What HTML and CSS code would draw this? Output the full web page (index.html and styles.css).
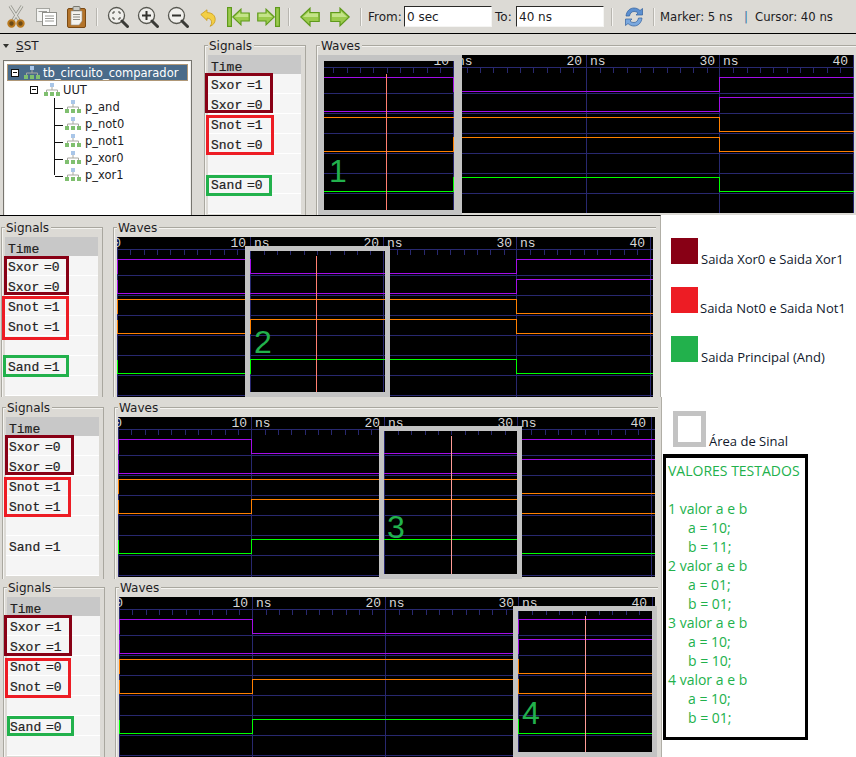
FILE: index.html
```
<!DOCTYPE html>
<html lang="pt">
<head>
<meta charset="utf-8">
<title>GTKWave</title>
<link rel="stylesheet" href="styles.css">
</head>
<body>
<svg class="defs" width="0" height="0" aria-hidden="true">
  <defs>
    <symbol id="wave" viewBox="0 0 537 160" overflow="visible">
      <g class="grid">
        <path d="M0 12.5H537M0 38.5H537M0 58.5H537M0 78.5H537M0 98.5H537M0 118.5H537M0 138.5H537M0 158.5H537"/>
        <path d="M.5 0V160M133.5 0V160M266.5 0V160M399.5 0V160M533.5 0V160"/>
        <path d="M13.5 12V18M27.5 12V18M40.5 12V18M53.5 12V18M67.5 12V18M80.5 12V18M93.5 12V18M107.5 12V18M120.5 12V18M147.5 12V18M160.5 12V18M173.5 12V18M187.5 12V18M200.5 12V18M213.5 12V18M227.5 12V18M240.5 12V18M253.5 12V18M280.5 12V18M293.5 12V18M307.5 12V18M320.5 12V18M333.5 12V18M347.5 12V18M360.5 12V18M373.5 12V18M387.5 12V18M413.5 12V18M427.5 12V18M440.5 12V18M453.5 12V18M467.5 12V18M480.5 12V18M493.5 12V18M507.5 12V18M520.5 12V18"/>
      </g>
      <path class="sig purple" d="M.5 36.5V22.5H133.5V36.5H399.5V22.5H537"/>
      <path class="sig purple" d="M.5 42.5V56.5H399.5V42.5H537"/>
      <path class="sig orange" d="M.5 76.5V62.5H399.5V76.5H537"/>
      <path class="sig orange" d="M.5 82.5V96.5H133.5V82.5H399.5V96.5H537"/>
      <path class="sig green" d="M.5 122.5V136.5H133.5V122.5H399.5V136.5H537"/>
    </symbol>
    <symbol id="hier" viewBox="0 0 16 14">
      <rect x="6" y="0" width="4" height="4" fill="#a9c6e8"/>
      <path d="M8 4V7M2.5 9V7H13.5V9" fill="none" stroke="#a8a8a0"/>
      <rect x="0" y="9" width="4" height="4" fill="#7fbf6f"/>
      <rect x="6" y="9" width="4" height="4" fill="#7fbf6f"/>
      <rect x="12" y="9" width="4" height="4" fill="#7fbf6f"/>
    </symbol>
    <symbol id="go-left" viewBox="0 0 20 20">
      <path d="M.8 10 10 1.2V5.500H19.200V14.500H10V18.800Z" fill="#9ccb4e" stroke="#5f9a1c" stroke-width="1.200"/>
      <path d="M3 10 9 4.500V6.500H18V10Z" fill="#c4e389"/>
    </symbol>
    <symbol id="go-right" viewBox="0 0 20 20">
      <path d="M19.200 10 10 1.200V5.500H.8V14.500H10V18.800Z" fill="#9ccb4e" stroke="#5f9a1c" stroke-width="1.200"/>
      <path d="M17 10 11 4.500V6.500H2V10Z" fill="#c4e389"/>
    </symbol>
    <symbol id="lens" viewBox="0 0 22 22">
      <circle cx="9.500" cy="9.500" r="8" fill="#f0efec" stroke="#56564f" stroke-width="1.300"/>
      <path d="M15 15 20.500 20.500" stroke="#3a3a36" stroke-width="3" stroke-linecap="round"/>
    </symbol>
  </defs>
</svg>

<section class="shot shot-main">
  <header class="toolbar">
    <span class="slot">
      <svg class="ico-cut" viewBox="0 0 18 23">
        <path d="M3 1 12 15M15 1 6 15" stroke="#8f8f88" stroke-width="3.200" fill="none"/>
        <path d="M3 1 12 15M15 1 6 15" stroke="#dcdcd6" stroke-width="1.600" fill="none"/>
        <circle cx="4.500" cy="18.500" r="3.200" fill="#6b4a17" stroke="#b9791f" stroke-width="2"/>
        <circle cx="13.500" cy="18.500" r="3.200" fill="#6b4a17" stroke="#b9791f" stroke-width="2"/>
      </svg>
    </span>
    <span class="slot">
      <svg class="ico-copy" viewBox="0 0 21 18">
        <rect x=".5" y=".5" width="13" height="13" fill="#f4f4f2" stroke="#a5a5a0"/>
        <rect x="6.500" y="4.500" width="14" height="13" fill="#fff" stroke="#8f8f8a"/>
        <path d="M9 8H18M9 10.500H18M9 13H18M2.500 3.500H11" stroke="#9a9a96"/>
      </svg>
    </span>
    <span class="slot">
      <svg class="ico-paste" viewBox="0 0 19 22">
        <rect x=".5" y="2.500" width="18" height="19" rx="1.500" fill="#b4742a" stroke="#7a4a14"/>
        <path d="M4 5H15V15L12 19H4Z" fill="#f4f3ee" stroke="#9c9c94" stroke-width=".6"/>
        <rect x="6" y=".5" width="7" height="4" rx="1" fill="#c9c9c3" stroke="#77776f"/>
        <path d="M6 8.500H13M6 11H13M6 13.500H13" stroke="#8a8a84"/>
      </svg>
    </span>
    <span class="sep"></span>
    <span class="slot">
      <svg class="ico-zoom" viewBox="0 0 22 22"><use href="#lens"/><path d="M6 8V6H8M11 6H13V8M13 11V13H11M8 13H6V11" fill="none" stroke="#44443f"/></svg>
    </span>
    <span class="slot">
      <svg class="ico-zoom" viewBox="0 0 22 22"><use href="#lens"/><path d="M5 9.500H14M9.500 5V14" stroke="#33332f" stroke-width="2"/></svg>
    </span>
    <span class="slot">
      <svg class="ico-zoom" viewBox="0 0 22 22"><use href="#lens"/><path d="M5 9.500H14" stroke="#33332f" stroke-width="2"/></svg>
    </span>
    <span class="slot">
      <svg class="ico-undo" viewBox="0 0 16 18">
        <path d="M.8 5.500 7 .8V3.600C12.500 3.600 15.200 6.800 15.200 10.500 15.200 13.800 13 16.300 10 17.300 11.800 15.300 12 13 11 11.200 10.200 9.800 8.800 9.200 7 9.200V11.500Z" fill="#f3cf45" stroke="#c99a1a" stroke-width=".8"/>
      </svg>
    </span>
    <span class="slot">
      <svg class="ico-jump" viewBox="0 0 23 20">
        <rect x=".6" y=".6" width="3.800" height="18.800" fill="#9ccb4e" stroke="#5f9a1c" stroke-width="1.200"/>
        <svg x="5" y="1" width="18" height="18" viewBox="0 0 20 20"><use href="#go-left"/></svg>
      </svg>
    </span>
    <span class="slot">
      <svg class="ico-jump" viewBox="0 0 23 20">
        <rect x="18.600" y=".6" width="3.800" height="18.800" fill="#9ccb4e" stroke="#5f9a1c" stroke-width="1.200"/>
        <svg x="0" y="1" width="18" height="18" viewBox="0 0 20 20"><use href="#go-right"/></svg>
      </svg>
    </span>
    <span class="sep"></span>
    <span class="slot"><svg class="ico-go" viewBox="0 0 20 20"><use href="#go-left"/></svg></span>
    <span class="slot"><svg class="ico-go" viewBox="0 0 20 20"><use href="#go-right"/></svg></span>
    <span class="sep"></span>
    <label class="tb-label tb-from">From:</label>
    <input class="tb-input" value="0 sec">
    <label class="tb-label tb-to">To:</label>
    <input class="tb-input" value="40 ns">
    <span class="sep"></span>
    <span class="slot">
      <svg class="ico-reload" viewBox="0 0 20 20">
        <path d="M2 9C2.500 4 6 1 10 1 12.500 1 14.500 2 16 3.500L18.500 1.500V8H12L14 6C13 5 11.500 4.500 10 4.500 8 4.500 6 6 5.500 9Z" fill="#5b8fd0" stroke="#2f5f9e" stroke-width=".7"/>
        <path d="M18 11C17.500 16 14 19 10 19 7.500 19 5.500 18 4 16.500L1.500 18.500V12H8L6 14C7 15 8.500 15.500 10 15.500 12 15.500 14 14 14.500 11Z" fill="#7aa8de" stroke="#2f5f9e" stroke-width=".7"/>
      </svg>
    </span>
    <span class="sep"></span>
    <p class="status"><span class="status-marker">Marker: 5 ns</span><span class="status-bar">|</span><span>Cursor: 40 ns</span></p>
  </header>

  <div class="main-body">
    <aside class="sst">
      <h2 class="sst-title"><span class="tri"></span><span><u>S</u>ST</span></h2>
      <div class="tree">
        <div class="tree-row tree-root"><span class="exp"></span><svg class="hier"><use href="#hier"/></svg><span>tb_circuito_comparador</span></div>
        <div class="tree-row tree-uut"><span class="exp"></span><svg class="hier"><use href="#hier"/></svg><span>UUT</span></div>
        <div class="tree-kids">
          <div class="tree-row tree-leaf"><svg class="hier"><use href="#hier"/></svg><span>p_and</span></div>
          <div class="tree-row tree-leaf"><svg class="hier"><use href="#hier"/></svg><span>p_not0</span></div>
          <div class="tree-row tree-leaf"><svg class="hier"><use href="#hier"/></svg><span>p_not1</span></div>
          <div class="tree-row tree-leaf"><svg class="hier"><use href="#hier"/></svg><span>p_xor0</span></div>
          <div class="tree-row tree-leaf"><svg class="hier"><use href="#hier"/></svg><span>p_xor1</span></div>
        </div>
      </div>
    </aside>
    <div class="duo">
      <div class="pane pane-signals">
        <span class="pane-title">Signals</span>
        <ul class="siglist">
          <li class="sighead">Time</li>
          <li>Sxor =1</li><li>Sxor =0</li><li>Snot =1</li><li>Snot =0</li><li></li><li>Sand =0</li><li></li>
        </ul>
        <i class="mark maroon m1a"></i><i class="mark red m1b"></i><i class="mark grn m1c"></i>
      </div>
      <div class="pane pane-waves">
        <span class="pane-title">Waves</span>
        <div class="view view-1">
          <svg class="trace" viewBox="0 0 534 158">
            <use href="#wave" width="537" height="160"/>
            <line class="cursor" x1="66.500" x2="66.500" y1="19" y2="158"/>
            <g class="axis"><text x="129" y="10" text-anchor="end">10</text><text x="137" y="10">ns</text><text x="262" y="10" text-anchor="end">20</text><text x="270" y="10">ns</text><text x="395" y="10" text-anchor="end">30</text><text x="403" y="10">ns</text><text x="528" y="10" text-anchor="end">40</text></g>
          </svg>
          <div class="area area-1"><b class="num num-1">1</b></div>
        </div>
      </div>
    </div>
  </div>
</section>

<section class="shot shot-2">
  <div class="duo">
    <div class="pane pane-signals">
      <span class="pane-title">Signals</span>
      <ul class="siglist">
        <li class="sighead">Time</li>
        <li>Sxor =0</li><li>Sxor =0</li><li>Snot =1</li><li>Snot =1</li><li></li><li>Sand =1</li><li></li>
      </ul>
      <i class="mark maroon m2a"></i><i class="mark red m2b"></i><i class="mark grn m2c"></i>
    </div>
    <div class="pane pane-waves">
      <span class="pane-title">Waves</span>
      <div class="view">
        <svg class="trace" viewBox="0 0 536 160">
          <use href="#wave" width="537" height="160"/>
          <line class="cursor" x1="199.500" x2="199.500" y1="19" y2="160"/>
          <g class="axis"><text x="4" y="10" text-anchor="end">0</text><text x="129" y="10" text-anchor="end">10</text><text x="137" y="10">ns</text><text x="262" y="10" text-anchor="end">20</text><text x="270" y="10">ns</text><text x="395" y="10" text-anchor="end">30</text><text x="403" y="10">ns</text><text x="528" y="10" text-anchor="end">40</text></g>
        </svg>
        <div class="area area-2"><b class="num num-2">2</b></div>
      </div>
    </div>
  </div>
</section>

<section class="shot shot-3">
  <div class="duo">
    <div class="pane pane-signals">
      <span class="pane-title">Signals</span>
      <ul class="siglist">
        <li class="sighead">Time</li>
        <li>Sxor =0</li><li>Sxor =0</li><li>Snot =1</li><li>Snot =1</li><li></li><li>Sand =1</li><li></li>
      </ul>
      <i class="mark maroon m3a"></i><i class="mark red m3b"></i>
    </div>
    <div class="pane pane-waves">
      <span class="pane-title">Waves</span>
      <div class="view view-3">
        <svg class="trace" viewBox="0 0 537 160">
          <use href="#wave" width="537" height="160"/>
          <line class="cursor cursor-rose" x1="333.500" x2="333.500" y1="19" y2="160"/>
          <g class="axis"><text x="4" y="10" text-anchor="end">0</text><text x="129" y="10" text-anchor="end">10</text><text x="137" y="10">ns</text><text x="262" y="10" text-anchor="end">20</text><text x="270" y="10">ns</text><text x="395" y="10" text-anchor="end">30</text><text x="403" y="10">ns</text><text x="528" y="10" text-anchor="end">40</text></g>
        </svg>
        <div class="area area-3"><b class="num num-3">3</b></div>
      </div>
    </div>
  </div>
</section>

<section class="shot shot-4">
  <div class="duo">
    <div class="pane pane-signals">
      <span class="pane-title">Signals</span>
      <ul class="siglist">
        <li class="sighead">Time</li>
        <li>Sxor =1</li><li>Sxor =1</li><li>Snot =0</li><li>Snot =0</li><li></li><li>Sand =0</li><li></li>
      </ul>
      <i class="mark maroon m4a"></i><i class="mark red m4b"></i><i class="mark grn m4c"></i>
    </div>
    <div class="pane pane-waves">
      <span class="pane-title">Waves</span>
      <div class="view">
        <svg class="trace" viewBox="0 0 536 160">
          <use href="#wave" width="537" height="160"/>
          <line class="cursor cursor-rose" x1="466.500" x2="466.500" y1="19" y2="160"/>
          <g class="axis"><text x="4" y="10" text-anchor="end">0</text><text x="129" y="10" text-anchor="end">10</text><text x="137" y="10">ns</text><text x="262" y="10" text-anchor="end">20</text><text x="270" y="10">ns</text><text x="395" y="10" text-anchor="end">30</text><text x="403" y="10">ns</text><text x="528" y="10" text-anchor="end">40</text></g>
        </svg>
        <div class="area area-4"><b class="num num-4">4</b></div>
      </div>
    </div>
  </div>
</section>

<section class="legend">
  <div class="key key-xor"><span class="swatch sw-maroon"></span><span>Saida Xor0 e Saida Xor1</span></div>
  <div class="key key-not"><span class="swatch sw-red"></span><span>Saida Not0 e Saida Not1</span></div>
  <div class="key key-and"><span class="swatch sw-green"></span><span>Saida Principal (And)</span></div>
  <div class="key key-area"><span class="swatch sw-area"></span><span>Área de Sinal</span></div>
</section>

<section class="values">
  <h3>VALORES TESTADOS</h3>
  <p>1 valor a e b</p><p class="ind">a = 10;</p><p class="ind">b = 11;</p>
  <p>2 valor a e b</p><p class="ind">a = 01;</p><p class="ind">b = 01;</p>
  <p>3 valor a e b</p><p class="ind">a = 10;</p><p class="ind">b = 10;</p>
  <p>4 valor a e b</p><p class="ind">a = 10;</p><p class="ind">b = 01;</p>
</section>
</body>
</html>
```
FILE: styles.css
```
* { box-sizing: border-box; }
html, body { margin: 0; padding: 0; }
body {
  position: relative;
  width: 856px;
  height: 757px;
  overflow: hidden;
  background: #fff;
  font-family: "DejaVu Sans", sans-serif;
  font-size: 12px;
  color: #1c1c24;
}
.defs { position: absolute; }

/* Collage: each pasted screenshot sits on the free canvas */
.shot {
  position: absolute;
  left: 0;
  overflow: hidden;
  background: #dcdad5;
}
.shot-main { top: 0; width: 856px; height: 215px; }
.shot-2 { top: 215px; width: 661px; height: 182px; padding: 11px 0 0 1px; border-top: 1px solid #000; border-right: 1px solid #b0aea6; }
.shot-3 { top: 397px; width: 662px; height: 182px; padding: 10px 0 0 2px; border-right: 1px solid #b0aea6; z-index: 1; }
.shot-4 { top: 577px; width: 662px; height: 180px; padding: 10px 0 0 3px; border-right: 1px solid #b0aea6; }

/* Toolbar */
.toolbar {
  display: grid;
  grid-template-columns: 30px 31px 29px 11px 31px 30px 30px 30px 31px 29px 12px 30px 30px 12px 37px 88px 24px 88px 16px 28px 12px auto;
  align-items: center;
  height: 34px;
  padding-left: 1px;
  border-bottom: 1px solid #000;
}
.slot { display: flex; justify-content: center; align-items: center; }
.slot svg { display: block; }
.ico-cut { width: 18px; height: 23px; }
.ico-copy { width: 21px; height: 18px; }
.ico-paste { width: 19px; height: 22px; }
.ico-zoom { width: 22px; height: 22px; }
.ico-undo { width: 16px; height: 18px; margin-top: 2px; }
.ico-jump { width: 23px; height: 20px; }
.ico-go { width: 20px; height: 20px; }
.ico-reload { width: 20px; height: 20px; }
.sep {
  justify-self: center;
  width: 2px;
  height: 18px;
  background: #f4f3f0;
  border-left: 1px solid #b8b6b0;
}
.tb-label { font-size: 12px; white-space: nowrap; }
.tb-from { padding-left: 1px; }
.tb-to { padding-left: 3px; }
.tb-input {
  width: 88px;
  height: 21px;
  padding: 0 2px;
  border: 1px solid;
  border-color: #2a2a28 #f5f5f3 #f5f5f3 #2a2a28;
  background: #fff;
  font: 12px "DejaVu Sans", sans-serif;
  color: #1c1c24;
}
.status { display: flex; margin: 0; font-size: 11.7px; white-space: nowrap; }
.status-marker { width: 73px; }
.status-bar { width: 11px; margin-left: 11px; color: #2e6da4; }

/* Main body under the toolbar */
.main-body { display: flex; height: 181px; }
.sst { width: 204px; flex: none; }
.sst-title {
  display: flex;
  align-items: center;
  gap: 7px;
  height: 26px;
  margin: 0;
  padding: 0 0 3px 3px;
  font-size: 12px;
  font-weight: 400;
}
.tri {
  width: 0;
  height: 0;
  border: 3px solid transparent;
  border-top: 4px solid #33332f;
  border-bottom: 0;
}
.tree {
  width: 189px;
  height: 160px;
  margin-left: 3px;
  padding: 3px;
  background: #fff;
  border: 1px solid #77756f;
  outline: 1px solid #f2f1ee;
  outline-offset: -2px;
  font-size: 11.5px;
}
.tree-row { display: flex; align-items: center; height: 17px; white-space: nowrap; }
.exp {
  position: relative;
  flex: none;
  width: 8px;
  height: 8px;
  border: 1px solid #111;
  background: #fff;
}
.exp::after {
  content: "";
  position: absolute;
  left: 1px;
  top: 2px;
  width: 4px;
  height: 2px;
  border-top: 1px solid #111;
}
.hier { flex: none; width: 16px; height: 14px; }
.tree-root {
  padding-left: 4px;
  gap: 5px;
  background: #4a6b8a;
  outline: 1px solid #b09878;
  outline-offset: -1px;
  color: #fff;
}
.tree-root span:last-child { margin-left: -2px; }
.tree-uut { padding-left: 23px; gap: 6px; }
.tree-uut span:last-child { margin-left: -3px; }
.tree-kids { margin-left: 47px; border-left: 1px solid #111; height: 77px; }
.tree-leaf { padding-left: 10px; gap: 4px; position: relative; }
.tree-leaf::before {
  content: "";
  position: absolute;
  left: 0;
  top: 10px;
  width: 8px;
  border-top: 1px solid #111;
}

/* Signals + Waves */
.duo { display: flex; gap: 10px; flex: none; }
.shot-main .duo { margin-top: 11px; }
.pane {
  position: relative;
  flex: none;
  padding: 9px 3px 0;
  border-top: 1px solid #a9a79f;
  border-left: 1px solid #a9a79f;
  box-shadow: inset 1px 1px 0 #f4f3f0;
}
.pane-signals { width: 102px; border-right: 1px solid #a9a79f; height: 200px; }
.pane-title {
  position: absolute;
  left: 3px;
  top: -7px;
  padding: 0 2px 0 1px;
  background: #dcdad5;
  font-size: 12px;
  line-height: 14px;
}
.siglist {
  width: 93px;
  margin: 0;
  padding: 0;
  list-style: none;
  background: #f5f5f5;
  font: 13px/24px "Liberation Mono", monospace;
  word-spacing: -3px;
  color: #222;
  -webkit-text-stroke: .2px #222;
}
.siglist li { height: 20px; padding-left: 3px; border-bottom: 1px solid #fff; white-space: pre; }
.siglist .sighead { height: 19px; line-height: 26px; background: #c8c8c8; border: 0; }
.mark { position: absolute; border: 3px solid; display: block; }
.maroon { border-color: #880015; }
.red { border-color: #ed1c24; }
.grn { border-color: #22b14c; }
.m1a { left: 0; top: 27px; width: 68px; height: 40px; }
.m1b { left: 1px; top: 69px; width: 68px; height: 40px; }
.m1c { left: 1px; top: 129px; width: 66px; height: 21px; }
.m2a { left: 2px; top: 28px; width: 65px; height: 39px; }
.m2b { left: 0; top: 68px; width: 67px; height: 44px; }
.m2c { left: 1px; top: 127px; width: 66px; height: 22px; }
.m3a { left: 2px; top: 27px; width: 69px; height: 40px; }
.m3b { left: 1px; top: 69px; width: 67px; height: 40px; }
.m4a { left: 0; top: 27px; width: 68px; height: 41px; }
.m4b { left: 1px; top: 70px; width: 66px; height: 40px; }
.m4c { left: 3px; top: 128px; width: 67px; height: 20px; }

.view { position: relative; }
.trace { display: block; width: 536px; height: 160px; background: #000; overflow: hidden; }
.view-1 .trace { width: 534px; height: 158px; }
.view-3 .trace { width: 537px; }
.grid path { fill: none; stroke: #28286f; stroke-width: 1; shape-rendering: crispEdges; }
.sig { fill: none; stroke-width: 1; shape-rendering: crispEdges; }
.purple { stroke: #a30de8; }
.orange { stroke: #ff8000; }
.green { stroke: #00ff00; }
.cursor { stroke: #ff7f70; stroke-width: 1; shape-rendering: crispEdges; }
.cursor-rose { stroke: #ff9c96; }
.axis text { font: 13px "Liberation Mono", monospace; fill: #d8d8d8; }

.area {
  position: absolute;
  display: flex;
  align-items: flex-start;
  border: 5px solid #c3c3c3;
  color: #22b14c;
}
.area-1 { left: -2px; top: 0; width: 144px; height: 160px; border-width: 6px 8px 5px 6px; }
.area-2 { left: 128px; top: 9px; width: 145px; height: 151px; }
.area-3 { left: 261px; top: 9px; width: 143px; height: 153px; }
.area-4 { left: 394px; top: 9px; width: 144px; height: 151px; }
.num { font: 400 32px/1 "Liberation Sans", sans-serif; }
.num-1 { margin: 94px 0 0 5px; }
.num-2 { margin: 75px 0 0 4px; }
.num-3 { margin: 80px 0 0 3px; }
.num-4 { margin: 86px 0 0 4px; }

/* Legend and values note on the white canvas */
.legend { position: absolute; left: 671px; top: 238px; }
.key {
  display: flex;
  align-items: flex-end;
  font: 13px/17px "Open Sans", sans-serif;
  color: #10182c;
  white-space: nowrap;
}
.key span:last-child { margin-bottom: -4px; }
.key-area span:last-child { margin-bottom: -3px; }
.swatch { flex: none; display: block; }
.sw-maroon, .sw-red, .sw-green { width: 27px; height: 26px; }
.sw-maroon { background: #880015; margin-right: 3px; }
.sw-red { background: #ed1c24; margin-right: 2px; }
.sw-green { background: #22b14c; margin-right: 3px; }
.sw-area { width: 33px; height: 36px; margin: 0 3px 0 2px; border: 5px solid #c3c3c3; }
.key-not { margin-top: 23px; }
.key-and { margin-top: 23px; }
.key-area { margin-top: 49px; }

.values {
  position: absolute;
  left: 663px;
  top: 454px;
  z-index: 2;
  width: 145px;
  height: 286px;
  padding: 3px 0 0 2px;
  border: 3px solid #000;
  border-top-width: 4px;
  background: #fff;
  font: 14px/19px "Open Sans", sans-serif;
  color: #22b14c;
}
.values h3 { margin: 0 0 19px; font: inherit; white-space: nowrap; }
.values p { margin: 0; }
.values .ind { padding-left: 20px; }
```
